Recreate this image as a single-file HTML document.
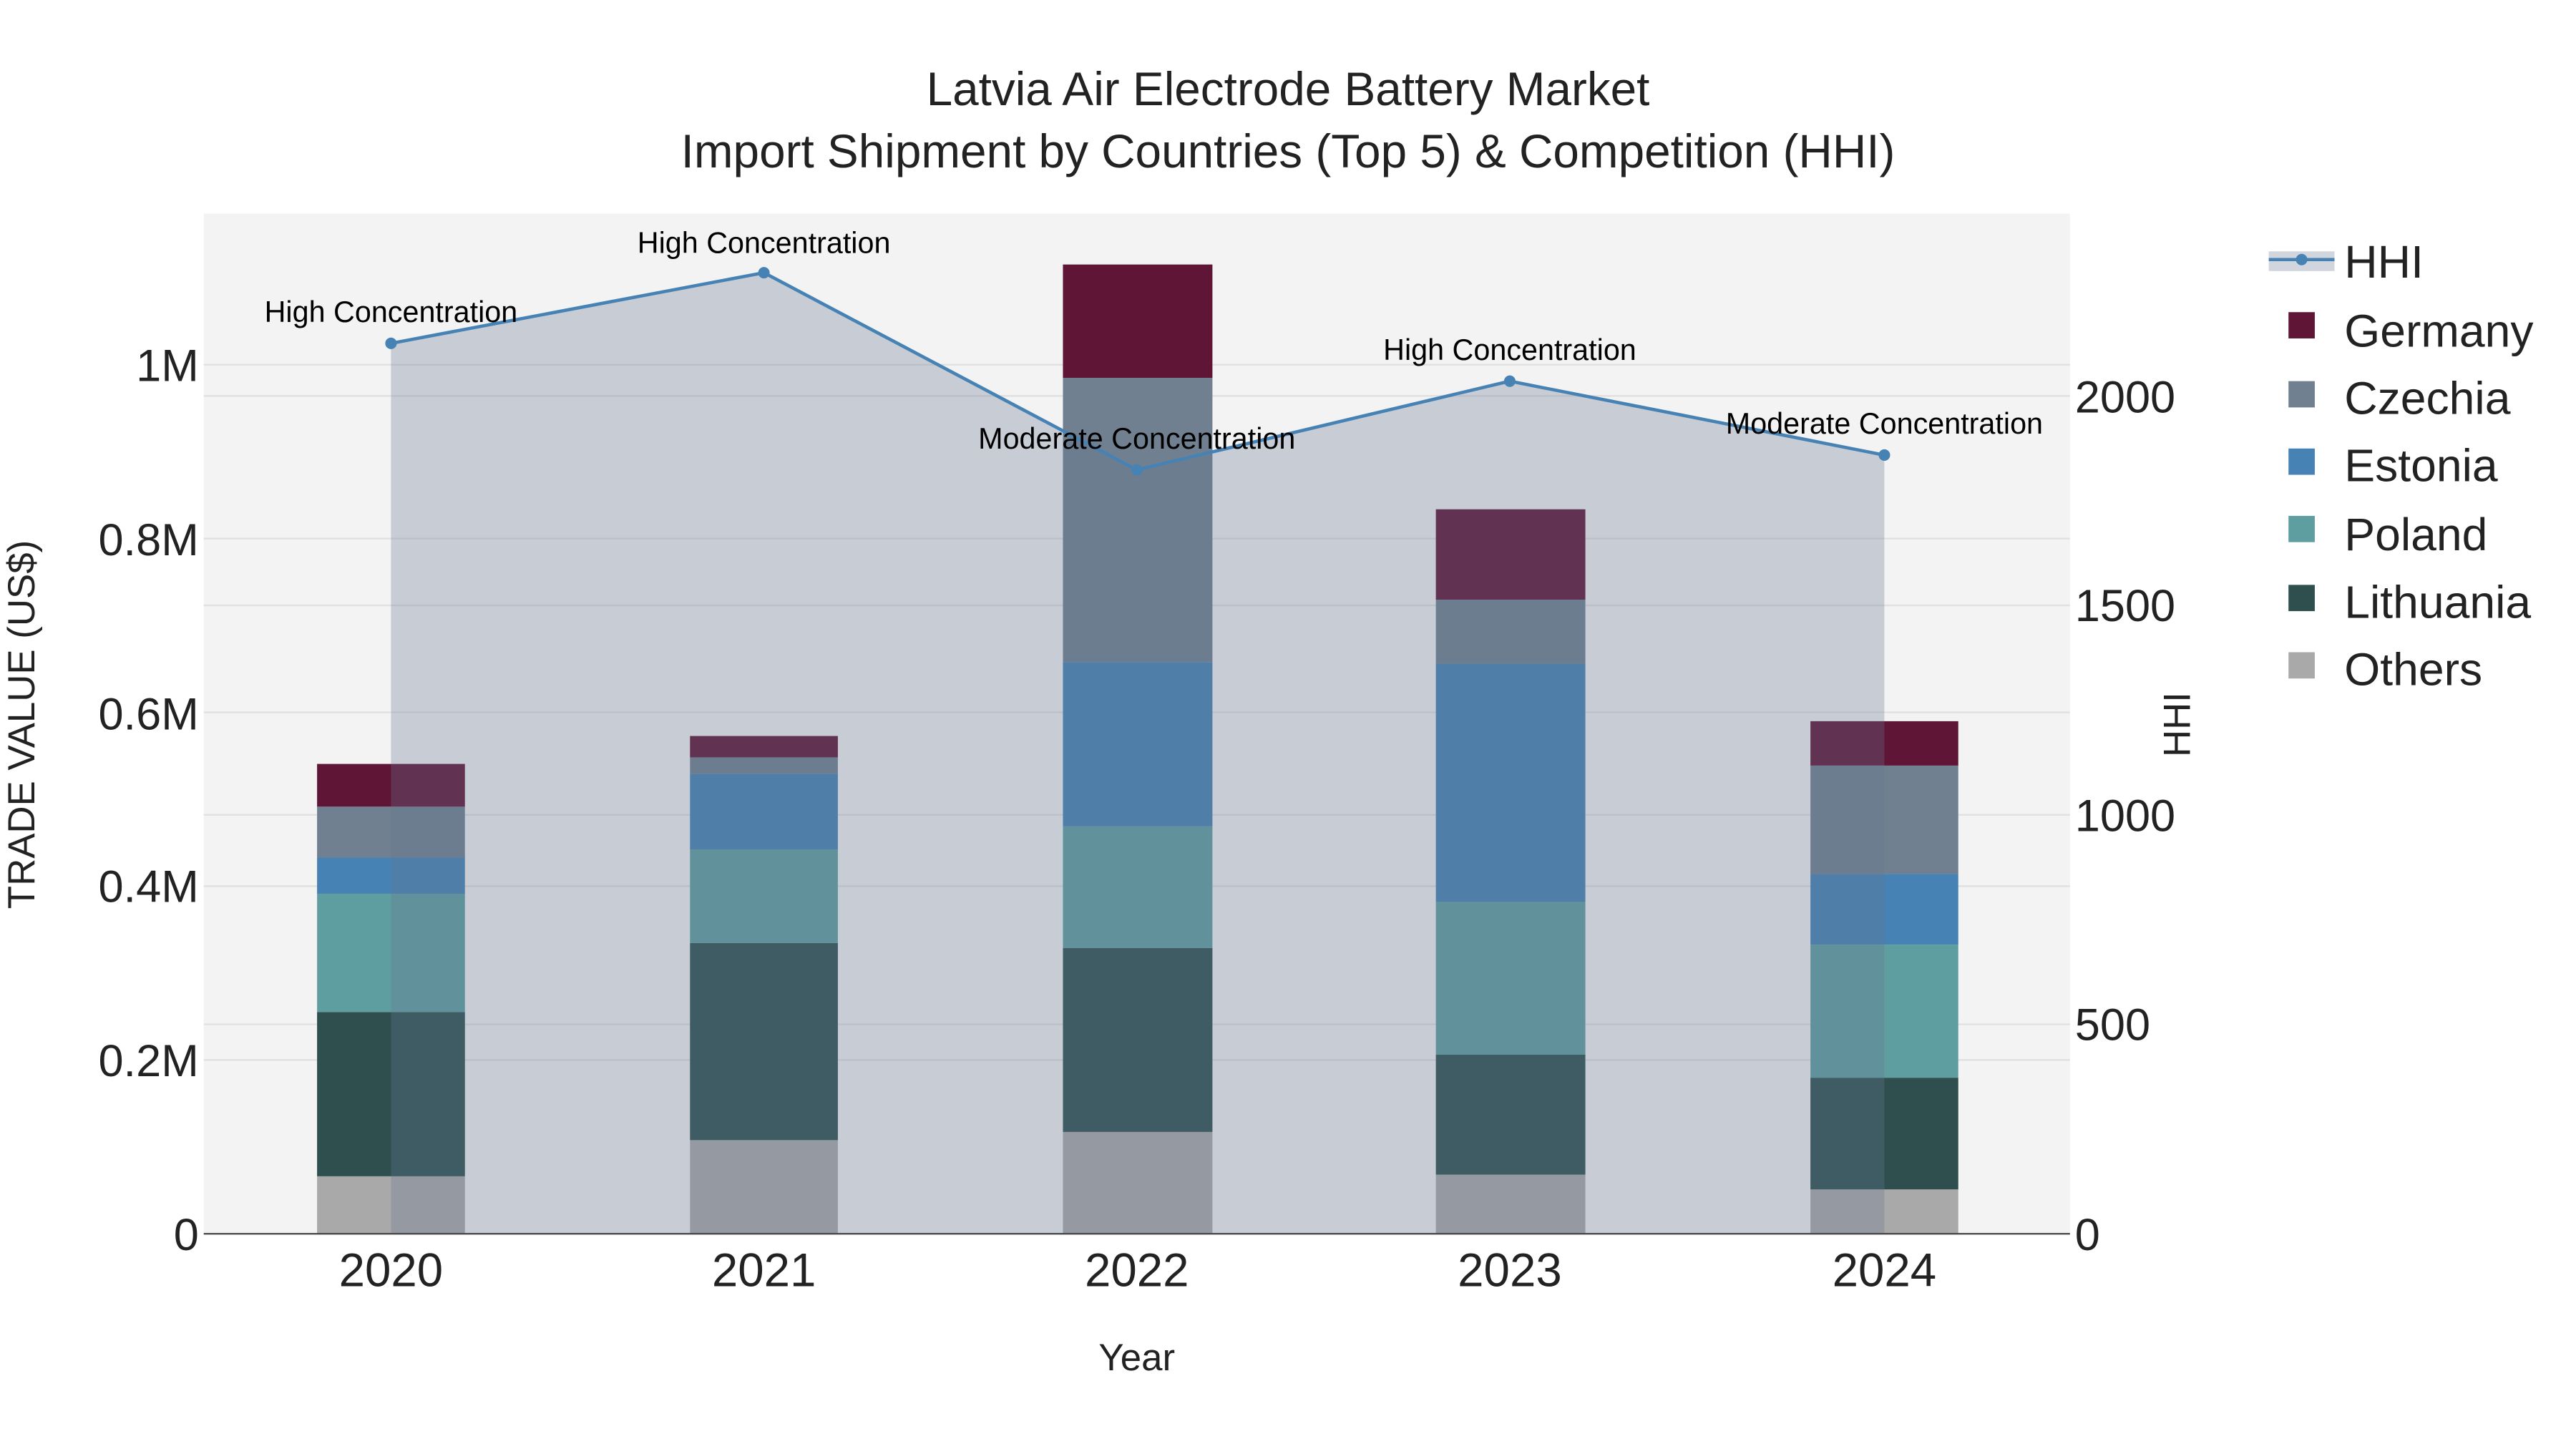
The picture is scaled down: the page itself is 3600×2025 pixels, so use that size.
<!DOCTYPE html>
<html><head><meta charset="utf-8"><style>html,body{margin:0;padding:0;background:#fff}svg{display:block}</style></head>
<body>
<svg width="3600" height="2025" viewBox="0 0 1568 882" xmlns="http://www.w3.org/2000/svg" font-family="Liberation Sans, Arial, sans-serif">
<rect x="0" y="0" width="1568" height="882" fill="#fff"/>
<rect x="124" y="130" width="1136" height="621" fill="#f3f3f3"/>
<g stroke="#e0e0e0" stroke-width="1">
<line x1="124" x2="1260" y1="645.2" y2="645.2"/><line x1="124" x2="1260" y1="539.4" y2="539.4"/>
<line x1="124" x2="1260" y1="433.6" y2="433.6"/><line x1="124" x2="1260" y1="327.8" y2="327.8"/>
<line x1="124" x2="1260" y1="222" y2="222"/>
<line x1="124" x2="1260" y1="623.5" y2="623.5"/><line x1="124" x2="1260" y1="496" y2="496"/>
<line x1="124" x2="1260" y1="368.5" y2="368.5"/><line x1="124" x2="1260" y1="241" y2="241"/>
</g>
<g>
<rect x="193" y="716" width="90" height="35" fill="#a9a9a9"/><rect x="193" y="616" width="90" height="100" fill="#2f4f4f"/><rect x="193" y="544" width="90" height="72" fill="#5f9ea0"/><rect x="193" y="522" width="90" height="22" fill="#4682b4"/><rect x="193" y="491" width="90" height="31" fill="#708090"/><rect x="193" y="465" width="90" height="26" fill="#5f1535"/>
<rect x="420" y="694" width="90" height="57" fill="#a9a9a9"/><rect x="420" y="574" width="90" height="120" fill="#2f4f4f"/><rect x="420" y="517" width="90" height="57" fill="#5f9ea0"/><rect x="420" y="471" width="90" height="46" fill="#4682b4"/><rect x="420" y="461" width="90" height="10" fill="#708090"/><rect x="420" y="448" width="90" height="13" fill="#5f1535"/>
<rect x="647" y="689" width="91" height="62" fill="#a9a9a9"/><rect x="647" y="577" width="91" height="112" fill="#2f4f4f"/><rect x="647" y="503" width="91" height="74" fill="#5f9ea0"/><rect x="647" y="403" width="91" height="100" fill="#4682b4"/><rect x="647" y="230" width="91" height="173" fill="#708090"/><rect x="647" y="161" width="91" height="69" fill="#5f1535"/>
<rect x="874" y="715" width="91" height="36" fill="#a9a9a9"/><rect x="874" y="642" width="91" height="73" fill="#2f4f4f"/><rect x="874" y="549" width="91" height="93" fill="#5f9ea0"/><rect x="874" y="404" width="91" height="145" fill="#4682b4"/><rect x="874" y="365" width="91" height="39" fill="#708090"/><rect x="874" y="310" width="91" height="55" fill="#5f1535"/>
<rect x="1102" y="724" width="90" height="27" fill="#a9a9a9"/><rect x="1102" y="656" width="90" height="68" fill="#2f4f4f"/><rect x="1102" y="575" width="90" height="81" fill="#5f9ea0"/><rect x="1102" y="532" width="90" height="43" fill="#4682b4"/><rect x="1102" y="466" width="90" height="66" fill="#708090"/><rect x="1102" y="439" width="90" height="27" fill="#5f1535"/>
</g>
<polygon points="238,751 238,209 465,166 692,286 919,232 1147,277 1147,751" fill="rgb(103,120,146)" fill-opacity="0.3"/>
<polyline points="238,209 465,166 692,286 919,232 1147,277" fill="none" stroke="#4682b4" stroke-width="2"/>
<g fill="#4682b4"><circle cx="238" cy="209" r="3.5"/><circle cx="465" cy="166" r="3.5"/><circle cx="692" cy="286" r="3.5"/><circle cx="919" cy="232" r="3.5"/><circle cx="1147" cy="277" r="3.5"/></g>
<line x1="124" x2="1260" y1="751" y2="751" stroke="#444" stroke-width="1"/>
<g font-size="18" text-anchor="middle" fill="#000">
<text x="238" y="196">High Concentration</text><text x="465" y="154">High Concentration</text>
<text x="692" y="273">Moderate Concentration</text><text x="919" y="219">High Concentration</text>
<text x="1147" y="264">Moderate Concentration</text>
</g>
<g font-size="27.5" fill="#222" text-anchor="end">
<text x="121" y="761">0</text><text x="121" y="655">0.2M</text><text x="121" y="549">0.4M</text><text x="121" y="444">0.6M</text><text x="121" y="338">0.8M</text><text x="121" y="232">1M</text>
</g>
<g font-size="27.5" fill="#222" text-anchor="start">
<text x="1263" y="761">0</text><text x="1263" y="633">500</text><text x="1263" y="506">1000</text><text x="1263" y="378">1500</text><text x="1263" y="251">2000</text>
</g>
<g font-size="28.5" fill="#222" text-anchor="middle">
<text x="238" y="783">2020</text><text x="465" y="783">2021</text><text x="692" y="783">2022</text><text x="919" y="783">2023</text><text x="1147" y="783">2024</text>
</g>
<text x="692" y="834" font-size="23" text-anchor="middle" fill="#222">Year</text>
<text transform="translate(21,441) rotate(-90)" font-size="23" text-anchor="middle" fill="#222">TRADE VALUE (US$)</text>
<text transform="translate(1333,441) rotate(-90)" font-size="23" text-anchor="middle" fill="#222">HHI</text>
<g font-size="28.6" fill="#222" text-anchor="middle">
<text x="784" y="64">Latvia Air Electrode Battery Market</text>
<text x="784" y="102">Import Shipment by Countries (Top 5) &amp; Competition (HHI)</text>
</g>
<g>
<rect x="1381" y="153" width="40" height="12" fill="rgb(103,120,146)" fill-opacity="0.3"/>
<line x1="1381" x2="1421" y1="158" y2="158" stroke="#4682b4" stroke-width="2"/><circle cx="1401" cy="158" r="3.5" fill="#4682b4"/>
<rect x="1393" y="190" width="16" height="16" fill="#5f1535"/>
<rect x="1393" y="232" width="16" height="16" fill="#708090"/>
<rect x="1393" y="273" width="16" height="16" fill="#4682b4"/>
<rect x="1393" y="314" width="16" height="16" fill="#5f9ea0"/>
<rect x="1393" y="356" width="16" height="16" fill="#2f4f4f"/>
<rect x="1393" y="397" width="16" height="16" fill="#a9a9a9"/>
</g>
<g font-size="28" fill="#222">
<text x="1427" y="169">HHI</text><text x="1427" y="211">Germany</text><text x="1427" y="252">Czechia</text><text x="1427" y="293">Estonia</text><text x="1427" y="335">Poland</text><text x="1427" y="376">Lithuania</text><text x="1427" y="417">Others</text>
</g>
</svg>
</body></html>
